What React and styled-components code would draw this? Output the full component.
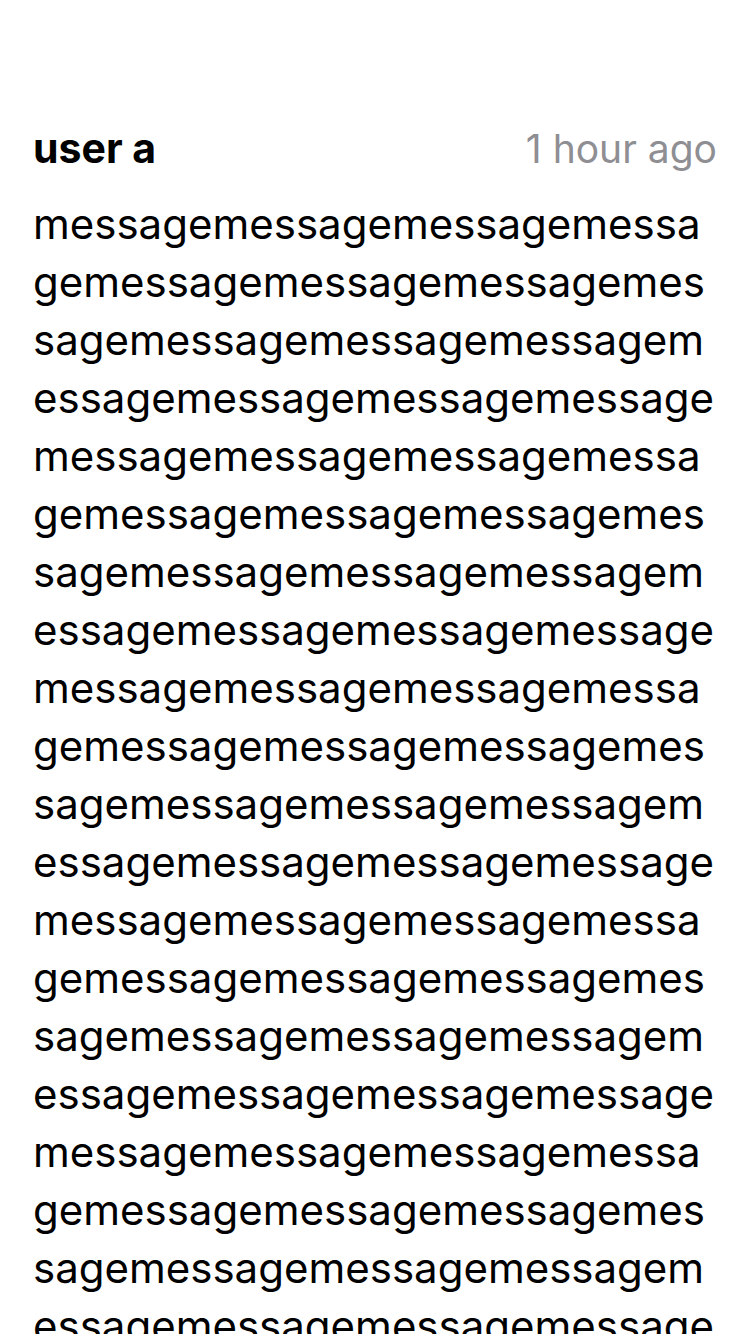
import React from "react";
import styled, { createGlobalStyle } from "styled-components";

const GlobalStyle = createGlobalStyle`
  html, body {
    margin: 0;
    padding: 0;
    background: #fff;
  }
  body {
    font-family: Inter, "Noto Sans", sans-serif;
    color: #000;
  }
`;

const Page = styled.main`
  padding: 120px 33px 0;
  height: 1334px;
  overflow: hidden;
  box-sizing: border-box;
`;

const Header = styled.div`
  display: flex;
  justify-content: space-between;
  align-items: baseline;
  margin-bottom: 18px;
`;

const UserName = styled.span`
  font-size: 41px;
  font-weight: 700;
  line-height: 56px;
`;

const TimeAgo = styled.span`
  font-size: 39px;
  color: #8e8e93;
  line-height: 56px;
`;

const Message = styled.p`
  margin: 0;
  font-size: 42px;
  line-height: 58px;
  word-break: break-all;
`;

const text = "message".repeat(120);

export const App = () => {
  return (
    <>
      <GlobalStyle />
      <Page>
        <Header>
          <UserName>user a</UserName>
          <TimeAgo>1 hour ago</TimeAgo>
        </Header>
        <Message>{text}</Message>
      </Page>
    </>
  );
};

export default App;
